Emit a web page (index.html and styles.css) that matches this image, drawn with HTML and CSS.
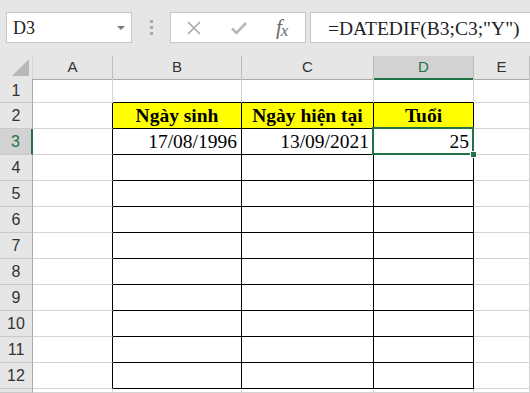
FILE: index.html
```html
<!DOCTYPE html>
<html lang="vi">
<head>
    <meta charset="UTF-8">
    <title>DATEDIF</title>
    <link rel="stylesheet" href="styles.css">
</head>
<body>
    <div class="toolbar">
        <div class="namebox">
            <span class="ref">D3</span>
            <span class="caret"></span>
        </div>
        <div class="grip"><i></i><i></i><i></i></div>
        <div class="fx-buttons">
            <svg class="icon" width="16" height="16" viewBox="0 0 16 16">
                <path d="M2 2 L14 14 M14 2 L2 14" stroke="#a8a8a8" stroke-width="1.6" fill="none"/>
            </svg>
            <svg class="icon" width="18" height="16" viewBox="0 0 18 16">
                <path d="M2 8.5 L6.5 13 L16 3" stroke="#b8b8b8" stroke-width="2.6" fill="none"/>
            </svg>
            <span class="fx">f<span class="x">x</span></span>
        </div>
        <div class="formula">=DATEDIF(B3;C3;"Y")</div>
    </div>

    <div class="sheet">
        <div class="row head">
            <div class="corner">
                <svg width="17" height="17" viewBox="0 0 17 17"><polygon points="17,0 17,17 0,17" fill="#b9b9b9"/></svg>
            </div>
            <div class="ch">A</div>
            <div class="ch">B</div>
            <div class="ch">C</div>
            <div class="ch active">D</div>
            <div class="ch">E</div>
        </div>
        <div class="row first">
            <div class="rh">1</div>
            <div class="c"></div>
            <div class="c top"></div>
            <div class="c top"></div>
            <div class="c top"></div>
            <div class="c"></div>
        </div>
        <div class="row">
            <div class="rh">2</div>
            <div class="c edge"></div>
            <div class="c t hd">Ngày sinh</div>
            <div class="c t hd">Ngày hiện tại</div>
            <div class="c t hd">Tuổi</div>
            <div class="c"></div>
        </div>
        <div class="row">
            <div class="rh active">3</div>
            <div class="c edge"></div>
            <div class="c t num">17/08/1996</div>
            <div class="c t num">13/09/2021</div>
            <div class="c t num selected">25</div>
            <div class="c"></div>
        </div>
        <div class="row"><div class="rh">4</div><div class="c edge"></div><div class="c t"></div><div class="c t"></div><div class="c t"></div><div class="c"></div></div>
        <div class="row"><div class="rh">5</div><div class="c edge"></div><div class="c t"></div><div class="c t"></div><div class="c t"></div><div class="c"></div></div>
        <div class="row"><div class="rh">6</div><div class="c edge"></div><div class="c t"></div><div class="c t"></div><div class="c t"></div><div class="c"></div></div>
        <div class="row"><div class="rh">7</div><div class="c edge"></div><div class="c t"></div><div class="c t"></div><div class="c t"></div><div class="c"></div></div>
        <div class="row"><div class="rh">8</div><div class="c edge"></div><div class="c t"></div><div class="c t"></div><div class="c t"></div><div class="c"></div></div>
        <div class="row"><div class="rh">9</div><div class="c edge"></div><div class="c t"></div><div class="c t"></div><div class="c t"></div><div class="c"></div></div>
        <div class="row"><div class="rh">10</div><div class="c edge"></div><div class="c t"></div><div class="c t"></div><div class="c t"></div><div class="c"></div></div>
        <div class="row"><div class="rh">11</div><div class="c edge"></div><div class="c t"></div><div class="c t"></div><div class="c t"></div><div class="c"></div></div>
        <div class="row"><div class="rh">12</div><div class="c edge"></div><div class="c t"></div><div class="c t"></div><div class="c t"></div><div class="c"></div></div>
        <div class="row last"><div class="rh"></div><div class="c"></div><div class="c"></div><div class="c"></div><div class="c"></div><div class="c"></div></div>
    </div>
</body>
</html>
```

FILE: styles.css
```css
body {
    margin: 0;
    padding: 0;
    width: 530px;
    height: 393px;
    overflow: hidden;
    background: #fff;
    font-family: 'Liberation Serif', serif;
}

/* formula bar */
.toolbar {
    height: 56px;
    box-sizing: border-box;
    padding-top: 12px;
    background: #e6e6e6;
    display: flex;
    align-items: flex-start;
}

.namebox {
    margin-left: 6px;
    width: 126px;
    height: 31px;
    box-sizing: border-box;
    background: #fff;
    border: 1px solid #c6c6c6;
    display: flex;
    align-items: center;
    padding-left: 6px;
    padding-right: 6px;
}

.ref {
    flex: 1;
    font-family: 'Liberation Serif', serif;
    font-size: 18px;
    color: #222;
    padding-top: 1px;
}

.caret {
    width: 0;
    height: 0;
    border-left: 4px solid transparent;
    border-right: 4px solid transparent;
    border-top: 4px solid #7a7a7a;
}

.grip {
    width: 38px;
    height: 31px;
    display: flex;
    flex-direction: column;
    align-items: center;
    justify-content: center;
    gap: 3px;
}

.grip i {
    width: 3px;
    height: 3px;
    background: #a9a9a9;
}

.fx-buttons {
    width: 136px;
    height: 31px;
    box-sizing: border-box;
    background: #fff;
    border: 1px solid #c6c6c6;
    display: flex;
    align-items: center;
    padding-left: 15px;
    gap: 28px;
}

.fx {
    font-style: italic;
    font-size: 21px;
    color: #6a6a6a;
    line-height: 1;
}

.fx .x {
    font-size: 17px;
    position: relative;
    top: 2px;
    margin-left: -1px;
}

.formula {
    flex: 1;
    margin-left: 4px;
    height: 31px;
    box-sizing: border-box;
    background: #fff;
    border: 1px solid #c6c6c6;
    border-right: none;
    padding-left: 17px;
    font-size: 19.5px;
    line-height: 31px;
    color: #222;
    white-space: nowrap;
}

/* sheet grid */
.row {
    display: grid;
    grid-template-columns: 33px 80px 129px 132px 100px 1fr;
    height: 26px;
}

.row.head {
    height: 23px;
}

.row.first {
    height: 24px;
}

.row.last {
    height: 4px;
}

.row > div {
    box-sizing: border-box;
    border-right: 1px solid #d4d4d4;
    border-bottom: 1px solid #d4d4d4;
}

.corner {
    background: #e6e6e6;
    display: flex;
    align-items: flex-end;
    justify-content: flex-end;
    padding: 0 3px 3px 0;
}

.row > .ch {
    background: #e6e6e6;
    border-right-color: #bcbcbc;
    border-bottom-color: #ababab;
    font-family: 'Liberation Sans', sans-serif;
    font-size: 15px;
    color: #333;
    text-align: center;
    line-height: 22px;
}

.row > .ch.active {
    background: #d2d2d2;
    color: #217346;
    border-bottom: 2px solid #217346;
}

.row > .rh {
    background: #e6e6e6;
    border-right-color: #ababab;
    border-bottom-color: #c9c9c9;
    font-family: 'Liberation Sans', sans-serif;
    font-size: 16px;
    color: #333;
    display: flex;
    align-items: center;
    justify-content: center;
}

.row > .rh.active {
    background: #d2d2d2;
    color: #217346;
    border-right: 2px solid #217346;
}

.row > .c {
    font-size: 19.5px;
    color: #000;
    display: flex;
    align-items: center;
    white-space: nowrap;
}

.row > .edge {
    border-right-color: #000;
}

.row > .top {
    border-bottom-color: #000;
}

.row > .t {
    border-right-color: #000;
    border-bottom-color: #000;
}

.hd {
    background: #ffff00;
    font-weight: bold;
    font-size: 19px;
    justify-content: center;
}

.row > .num {
    justify-content: flex-end;
    padding-right: 4px;
}

.selected {
    position: relative;
}

.selected::after {
    content: '';
    position: absolute;
    left: -2px;
    top: -2px;
    right: -1px;
    bottom: -1px;
    border: 2px solid #217346;
}

.selected::before {
    content: '';
    position: absolute;
    right: -4px;
    bottom: -4px;
    width: 5px;
    height: 5px;
    background: #217346;
    border: 1px solid #fff;
    z-index: 1;
}
```
